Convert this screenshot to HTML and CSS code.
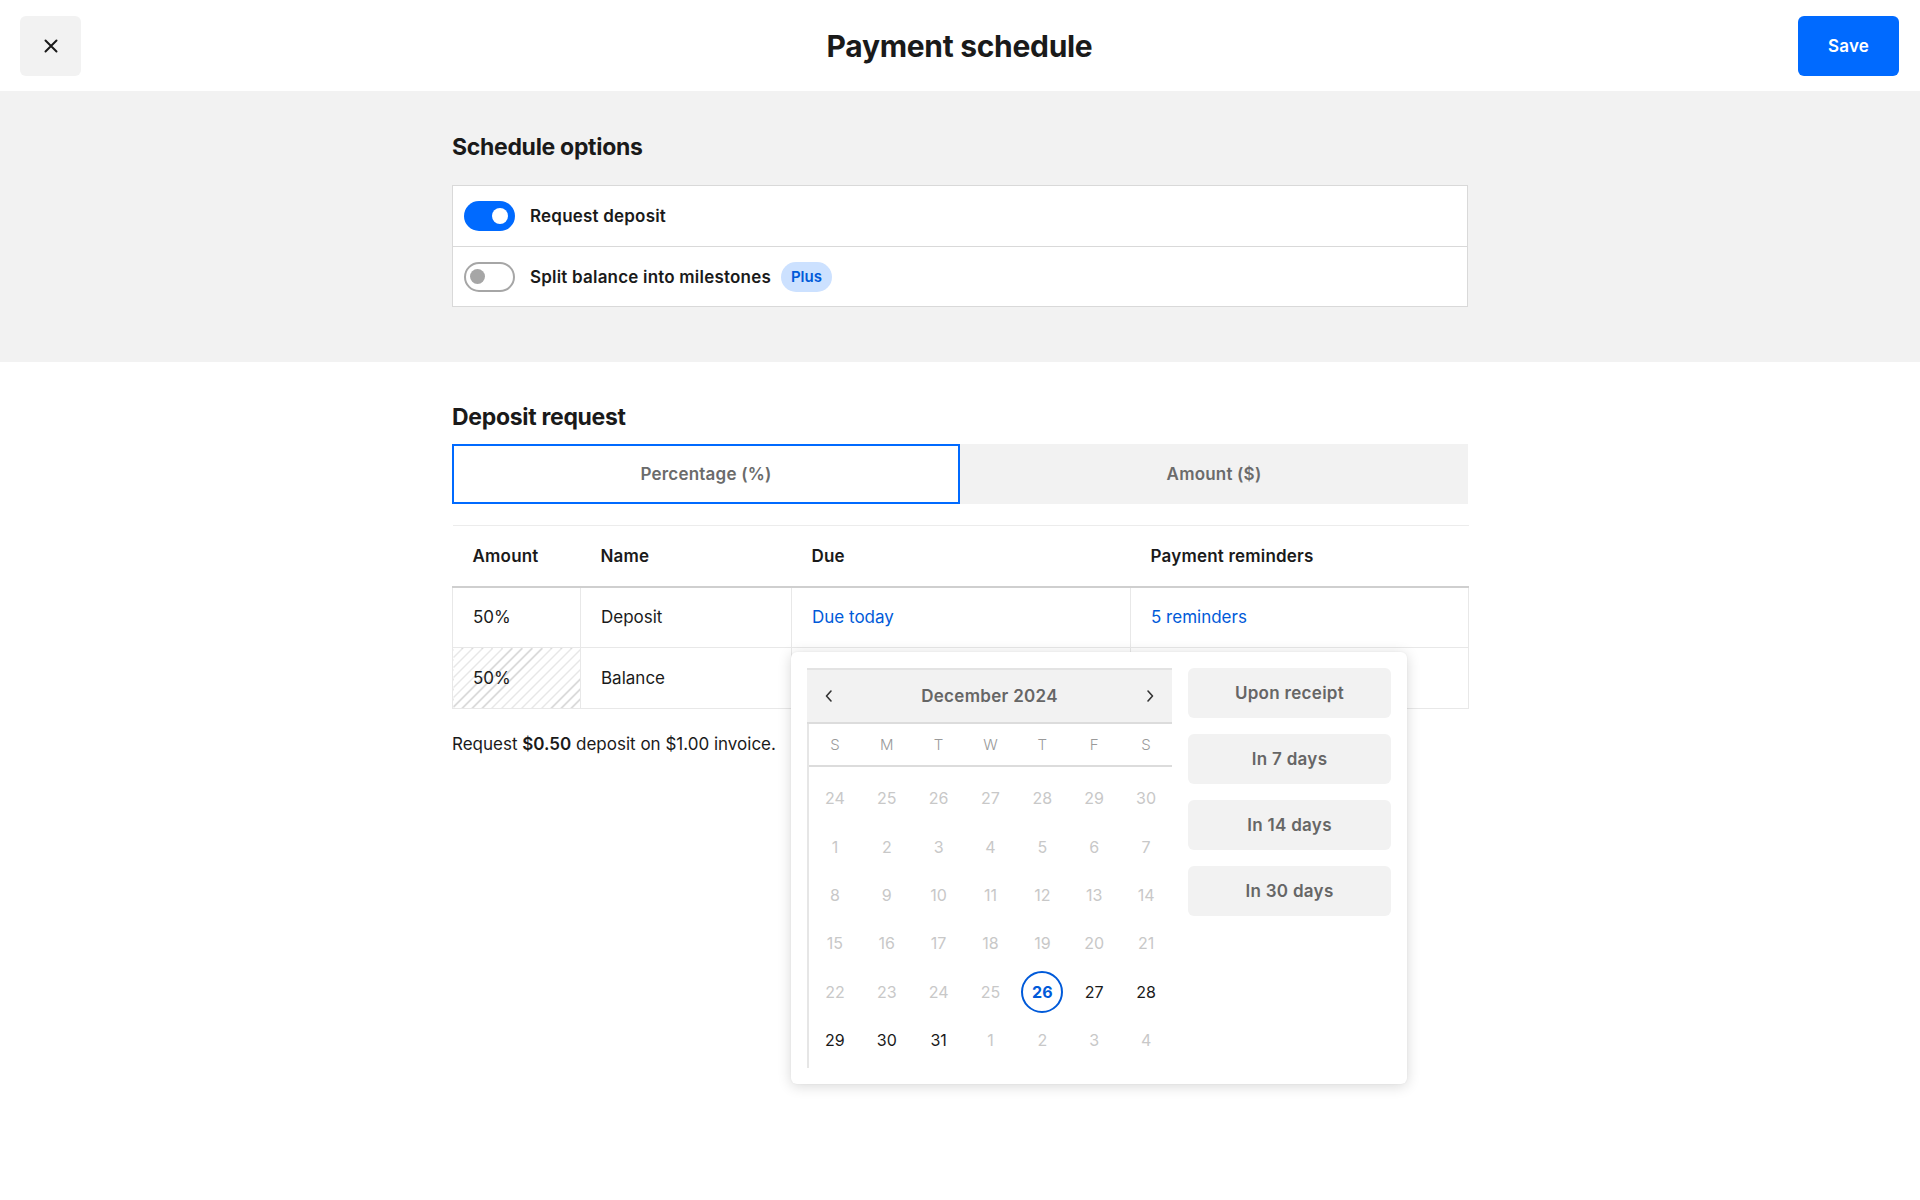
FILE: index.html
```html
<!DOCTYPE html>
<html lang="en">
<head>
<meta charset="utf-8">
<title>Payment schedule</title>
<link rel="stylesheet" href="styles.css">
</head>
<body>
<header class="topbar">
  <button class="close-btn" aria-label="Close">
    <svg width="16" height="16" viewBox="0 0 16 16"><path d="M2.5 2.5 L13.5 13.5 M13.5 2.5 L2.5 13.5" stroke="#1a1a1a" stroke-width="2" stroke-linecap="round" fill="none"/></svg>
  </button>
  <h1 class="title">Payment schedule</h1>
  <button class="save-btn">Save</button>
</header>

<section class="options-section">
  <div class="container">
    <h2 class="section-title">Schedule options</h2>
    <div class="options-box">
      <div class="option-row">
        <span class="toggle on"><span class="knob"></span></span>
        <span class="option-label">Request deposit</span>
      </div>
      <div class="option-row">
        <span class="toggle off"><span class="knob"></span></span>
        <span class="option-label">Split balance into milestones</span>
        <span class="badge">Plus</span>
      </div>
    </div>
  </div>
</section>

<section class="deposit-section">
  <div class="container">
    <h2 class="section-title">Deposit request</h2>
    <div class="tabs">
      <div class="tab active">Percentage (%)</div>
      <div class="tab">Amount ($)</div>
    </div>

    <div class="table-wrap">
      <table class="sched">
        <colgroup>
          <col class="c1"><col class="c2"><col class="c3"><col class="c4">
        </colgroup>
        <thead>
          <tr><th>Amount</th><th>Name</th><th>Due</th><th>Payment reminders</th></tr>
        </thead>
        <tbody>
          <tr><td>50%</td><td>Deposit</td><td><span class="link">Due today</span></td><td><span class="link">5 reminders</span></td></tr>
          <tr><td class="hatched">50%</td><td>Balance</td><td></td><td></td></tr>
        </tbody>
      </table>

      <div class="popover">
        <div class="calendar">
          <div class="cal-head">
            <span class="chev"><svg width="10" height="14" viewBox="0 0 10 14"><path d="M7 2 L2.5 7 L7 12" stroke="#333" stroke-width="1.6" fill="none" stroke-linecap="round" stroke-linejoin="round"/></svg></span>
            <span class="month">December 2024</span>
            <span class="chev"><svg width="10" height="14" viewBox="0 0 10 14"><path d="M3 2 L7.5 7 L3 12" stroke="#333" stroke-width="1.6" fill="none" stroke-linecap="round" stroke-linejoin="round"/></svg></span>
          </div>
          <div class="cal-body">
            <div class="weekdays">
              <span>S</span><span>M</span><span>T</span><span>W</span><span>T</span><span>F</span><span>S</span>
            </div>
            <div class="days">
              <span class="dim">24</span><span class="dim">25</span><span class="dim">26</span><span class="dim">27</span><span class="dim">28</span><span class="dim">29</span><span class="dim">30</span>
              <span class="dim">1</span><span class="dim">2</span><span class="dim">3</span><span class="dim">4</span><span class="dim">5</span><span class="dim">6</span><span class="dim">7</span>
              <span class="dim">8</span><span class="dim">9</span><span class="dim">10</span><span class="dim">11</span><span class="dim">12</span><span class="dim">13</span><span class="dim">14</span>
              <span class="dim">15</span><span class="dim">16</span><span class="dim">17</span><span class="dim">18</span><span class="dim">19</span><span class="dim">20</span><span class="dim">21</span>
              <span class="dim">22</span><span class="dim">23</span><span class="dim">24</span><span class="dim">25</span><span class="sel"><i>26</i></span><span>27</span><span>28</span>
              <span>29</span><span>30</span><span>31</span><span class="dim">1</span><span class="dim">2</span><span class="dim">3</span><span class="dim">4</span>
            </div>
          </div>
        </div>
        <div class="quick">
          <button class="quick-btn">Upon receipt</button>
          <button class="quick-btn">In 7 days</button>
          <button class="quick-btn">In 14 days</button>
          <button class="quick-btn">In 30 days</button>
        </div>
      </div>
    </div>

    <p class="summary">Request <b>$0.50</b> deposit on $1.00 invoice.</p>
  </div>
</section>
</body>
</html>
```

FILE: styles.css
```css
* { box-sizing: border-box; }
html, body { margin: 0; padding: 0; }
body {
  font-family: Inter, "Noto Sans", "Liberation Sans", sans-serif;
  color: #1a1a1a;
  background: #fff;
  height: 1200px;
}
button { font-family: inherit; border: none; cursor: pointer; }

.topbar {
  height: 91px;
  display: grid;
  grid-template-columns: 1fr auto 1fr;
  align-items: center;
  padding: 0 21px 0 20px;
  background: #fff;
}
.close-btn {
  justify-self: start;
  width: 61px;
  height: 60px;
  border-radius: 6px;
  background: #f2f2f2;
  display: flex;
  align-items: center;
  justify-content: center;
  padding: 0;
}
.title {
  margin: 0;
  font-size: 30px;
  font-weight: 700;
  letter-spacing: -0.3px;
}
.save-btn {
  justify-self: end;
  width: 101px;
  height: 60px;
  border-radius: 6px;
  background: #006aff;
  color: #fff;
  font-size: 17px;
  font-weight: 600;
  letter-spacing: 0.2px;
}

.container {
  width: 1016px;
  margin: 0 auto;
}

.options-section {
  background: #f2f2f2;
  padding: 41px 0 55px;
}
.section-title {
  margin: 0;
  font-size: 23px;
  line-height: 30px;
  font-weight: 700;
  letter-spacing: -0.3px;
}
.options-section .section-title { margin-bottom: 23px; }

.options-box {
  background: #fff;
  border: 1px solid #d9d9d9;
}
.option-row {
  height: 60px;
  display: flex;
  align-items: center;
  padding-left: 11px;
}
.option-row + .option-row { border-top: 1px solid #d9d9d9; }
.toggle {
  width: 51px;
  height: 30px;
  border-radius: 15px;
  display: flex;
  align-items: center;
  margin-right: 15px;
  flex: none;
}
.toggle.on { background: #006aff; justify-content: flex-end; padding-right: 7px; }
.toggle.on .knob { width: 16px; height: 16px; border-radius: 50%; background: #fff; }
.toggle.off { background: #fff; border: 2px solid #a6a6a6; padding-left: 4px; }
.toggle.off .knob { width: 15px; height: 15px; border-radius: 50%; background: #a6a6a6; }
.option-label { font-size: 17px; font-weight: 600; letter-spacing: 0.2px; }
.badge {
  margin-left: 10px;
  height: 30px;
  padding: 0 10px;
  border-radius: 15px;
  background: #cce1ff;
  color: #005ad9;
  font-size: 15px;
  font-weight: 600;
  display: inline-flex;
  align-items: center;
}

.deposit-section { padding-top: 40px; }
.deposit-section .section-title { margin-bottom: 12px; }

.tabs {
  display: grid;
  grid-template-columns: 1fr 1fr;
  height: 60px;
  background: #f2f2f2;
}
.tab {
  display: flex;
  align-items: center;
  justify-content: center;
  font-size: 17px;
  font-weight: 600;
  letter-spacing: 0.2px;
  color: #6b6b6b;
}
.tab.active { background: #fff; border: 2px solid #006aff; }

.table-wrap { position: relative; margin-top: 21px; }
.sched {
  width: 1016px;
  border-collapse: collapse;
  table-layout: fixed;
  font-size: 17px;
}
col.c1 { width: 128px; }
col.c2 { width: 211px; }
col.c3 { width: 339px; }
col.c4 { width: 338px; }
.sched th {
  height: 61px;
  text-align: left;
  font-weight: 600;
  letter-spacing: 0.2px;
  padding: 0 20px;
  border-top: 1px solid #ececec;
  border-bottom: 2px solid #cfcfcf;
}
.sched td {
  height: 61px;
  padding: 0 20px;
  border: 1px solid #e8e8e8;
  font-weight: 400;
}
.sched td.hatched {
  background: repeating-linear-gradient(135deg, #fff 0, #fff 6px, #cfcfcf 6px, #cfcfcf 7px);
}
.link { color: #005ad9; }

.summary {
  margin: 23px 0 0;
  font-size: 17px;
  line-height: 24px;
}
.summary b { font-weight: 600; }

.popover {
  position: absolute;
  left: 339px;
  top: 127px;
  width: 616px;
  background: #fff;
  border-radius: 6px;
  box-shadow: 0 2px 14px rgba(0,0,0,0.16), 0 0 2px rgba(0,0,0,0.06);
  padding: 16px;
  display: flex;
  gap: 16px;
}
.calendar { width: 365px; flex: none; }
.cal-head {
  height: 56px;
  background: #f2f2f2;
  border-top: 2px solid #e3e3e3;
  border-bottom: 2px solid #dcdcdc;
  display: flex;
  align-items: center;
  justify-content: space-between;
  padding: 0 17px 0 17px;
}
.chev { display: flex; align-items: center; }
.month { font-size: 17px; font-weight: 600; letter-spacing: 0.3px; color: #666; }
.cal-body { border-left: 2px solid #e6e6e6; padding-bottom: 4px; }
.weekdays {
  display: grid;
  grid-template-columns: repeat(7, 1fr);
  height: 43px;
  align-items: center;
  border-bottom: 2px solid #dcdcdc;
  font-size: 15px;
  font-weight: 300;
  color: #9a9a9a;
  text-align: center;
}
.days {
  display: grid;
  grid-template-columns: repeat(7, 1fr);
  grid-auto-rows: 48.4px;
  padding-top: 7px;
  font-size: 16px;
  color: #1a1a1a;
}
.days span { display: flex; align-items: center; justify-content: center; }
.days .dim { color: #c8c8c8; }
.days .sel i {
  font-style: normal;
  width: 42px;
  height: 42px;
  border-radius: 50%;
  border: 2px solid #005ad9;
  color: #005ad9;
  font-weight: 700;
  display: flex;
  align-items: center;
  justify-content: center;
}

.quick { display: flex; flex-direction: column; gap: 16px; width: 203px; }
.quick-btn {
  height: 50px;
  border-radius: 6px;
  background: #f2f2f2;
  color: #666;
  font-size: 17px;
  font-weight: 600;
  letter-spacing: 0.3px;
}
```
